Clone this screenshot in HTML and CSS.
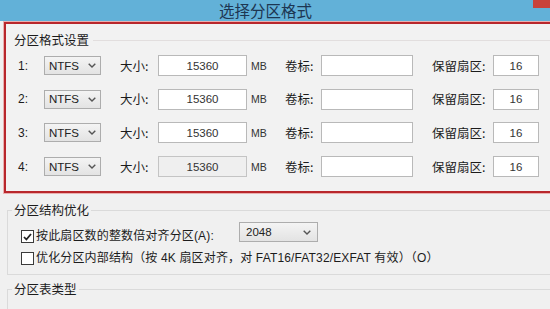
FILE: index.html
```html
<!DOCTYPE html>
<html lang="zh-CN">
<head>
<meta charset="utf-8">
<title>选择分区格式</title>
<link rel="stylesheet" href="styles.css">
</head>
<body>
<div class="titlebar">
  <span class="title">选择分区格式</span>
  <span class="close"></span>
</div>

<div class="redbox">
  <div class="group-head"><span>分区格式设置</span><i class="rule"></i></div>
  <div class="rows">
    <span class="num">1:</span>
    <div class="combo"><span>NTFS</span><svg class="chev" width="8" height="5" viewBox="0 0 8 5"><polyline points="0.7,0.7 4,4 7.3,0.7" fill="none" stroke="#555" stroke-width="1.4"/></svg></div>
    <span class="lbl">大小:</span>
    <div class="field">15360</div>
    <span class="mb">MB</span>
    <span class="lbl">卷标:</span>
    <div class="field"></div>
    <span class="lbl res">保留扇区:</span>
    <div class="field">16</div>

    <span class="num">2:</span>
    <div class="combo"><span>NTFS</span><svg class="chev" width="8" height="5" viewBox="0 0 8 5"><polyline points="0.7,0.7 4,4 7.3,0.7" fill="none" stroke="#555" stroke-width="1.4"/></svg></div>
    <span class="lbl">大小:</span>
    <div class="field">15360</div>
    <span class="mb">MB</span>
    <span class="lbl">卷标:</span>
    <div class="field"></div>
    <span class="lbl res">保留扇区:</span>
    <div class="field">16</div>

    <span class="num">3:</span>
    <div class="combo"><span>NTFS</span><svg class="chev" width="8" height="5" viewBox="0 0 8 5"><polyline points="0.7,0.7 4,4 7.3,0.7" fill="none" stroke="#555" stroke-width="1.4"/></svg></div>
    <span class="lbl">大小:</span>
    <div class="field">15360</div>
    <span class="mb">MB</span>
    <span class="lbl">卷标:</span>
    <div class="field"></div>
    <span class="lbl res">保留扇区:</span>
    <div class="field">16</div>

    <span class="num">4:</span>
    <div class="combo"><span>NTFS</span><svg class="chev" width="8" height="5" viewBox="0 0 8 5"><polyline points="0.7,0.7 4,4 7.3,0.7" fill="none" stroke="#555" stroke-width="1.4"/></svg></div>
    <span class="lbl">大小:</span>
    <div class="field disabled">15360</div>
    <span class="mb">MB</span>
    <span class="lbl">卷标:</span>
    <div class="field"></div>
    <span class="lbl res">保留扇区:</span>
    <div class="field">16</div>
  </div>
</div>

<fieldset class="group g2">
  <legend>分区结构优化</legend>
  <div class="opt-row first">
    <span class="cb"><svg width="9" height="8" viewBox="0 0 9 8"><polyline points="1,4 3.4,6.5 8,1" fill="none" stroke="#222" stroke-width="1.8"/></svg></span>
    <span class="opt-text">按此扇区数的整数倍对齐分区(A):</span>
    <div class="combo wide"><span>2048</span><svg class="chev" width="8" height="5" viewBox="0 0 8 5"><polyline points="0.7,0.7 4,4 7.3,0.7" fill="none" stroke="#555" stroke-width="1.4"/></svg></div>
  </div>
  <div class="opt-row second">
    <span class="cb"></span>
    <span class="opt-text">优化分区内部结构（按 4K 扇区对齐，对 FAT16/FAT32/EXFAT 有效）（O）</span>
  </div>
</fieldset>

<fieldset class="group g3">
  <legend>分区表类型</legend>
</fieldset>
</body>
</html>
```

FILE: styles.css
```css
html {
  margin: 0;
  padding: 0;
  overflow: hidden;
}

body {
  margin: 0;
  padding: 0;
  width: 550px;
  height: 309px;
  overflow: hidden;
  background: #f0f0f0;
  font-family: "Liberation Sans", "Noto Sans CJK SC", sans-serif;
  font-size: 12.5px;
  color: #1c1c1c;
}

.titlebar {
  height: 21px;
  background: #62b1d8;
  display: flex;
  align-items: flex-end;
  overflow: hidden;
}

.title {
  margin-left: 219px;
  font-family: "Noto Sans CJK SC", sans-serif;
  font-size: 15.5px;
  line-height: 15px;
  padding-bottom: 3px;
  color: #1d3652;
}

.close {
  margin-left: auto;
  align-self: flex-start;
  width: 17px;
  height: 8px;
  background: #c8423b;
}

.redbox {
  margin: 1px 0 0 4px;
  border: 2px solid #b8272c;
  border-right: none;
  box-shadow: 0 0 0 1px #eab0b0;
  padding: 0 0 14px 8px;
  background: #f2f2f2;
}

.group-head {
  display: flex;
  align-items: center;
  height: 16px;
  padding-top: 8px;
  font-family: "Noto Sans CJK SC", sans-serif;
  font-size: 12.5px;
  line-height: 16px;
}

.rule {
  flex: 1;
  height: 1px;
  margin-left: 4px;
  background: #e2dede;
}

.rows {
  display: grid;
  grid-template-columns: 26px 76px 38px 89px 38px 36px 92px 80px 46px;
  grid-auto-rows: 21px;
  row-gap: 12.7px;
  margin: 7px 0 0 4px;
  align-items: center;
}

.num {
  font-size: 12px;
}

.lbl {
  font-family: "Noto Sans CJK SC", sans-serif;
  font-size: 12.5px;
  line-height: 16px;
}

.res {
  padding-left: 19px;
}

.combo {
  width: 57px;
  height: 19px;
  box-sizing: border-box;
  border: 1px solid #adadad;
  background: linear-gradient(#f4f4f4, #e3e3e3);
  display: flex;
  align-items: center;
  justify-content: space-between;
  padding: 0 4px 0 4px;
  font-size: 11.5px;
  color: #222;
}

.combo.wide {
  width: 79px;
  height: 20px;
  padding-left: 6px;
  padding-right: 6px;
}

.field {
  height: 21px;
  box-sizing: border-box;
  border: 1px solid #b9b9b9;
  background: #fff;
  display: flex;
  align-items: center;
  justify-content: center;
  font-size: 11.5px;
  color: #333;
}

.field.disabled {
  background: #efefef;
  border-color: #c4c4c4;
}

.mb {
  padding-left: 4px;
  font-size: 10.5px;
  color: #333;
}

.group {
  margin: 0;
  padding: 0;
  min-width: 0;
  border: 1px solid #dadada;
  border-right: none;
}

.group legend {
  margin-left: 4px;
  padding: 0 2px;
  font-family: "Noto Sans CJK SC", sans-serif;
  font-size: 12.5px;
  line-height: 16px;
  color: #1c1c1c;
}

.g2 {
  margin: 9px 0 0 7px;
  padding-bottom: 8px;
}

.g3 {
  margin: 6px 0 0 7px;
  padding-bottom: 30px;
}

.opt-row {
  display: grid;
  grid-template-columns: 13px 201px 79px;
  column-gap: 2px;
  margin-left: 13px;
}

.opt-row.first {
  height: 20px;
  margin-top: 4px;
  align-items: end;
}

.opt-row.second {
  grid-template-columns: 13px auto;
  height: 16px;
  margin-top: 8px;
  align-items: center;
}

.cb {
  width: 13px;
  height: 13px;
  box-sizing: border-box;
  border: 1px solid #3a3a3a;
  background: #fff;
  display: flex;
  align-items: center;
  justify-content: center;
}

.opt-row.first .cb {
  margin-bottom: -1px;
}

.opt-row.first .opt-text {
  margin-bottom: -2px;
}

.opt-text {
  font-size: 12px;
  line-height: 16px;
  white-space: nowrap;
  letter-spacing: 0.15px;
}
```
